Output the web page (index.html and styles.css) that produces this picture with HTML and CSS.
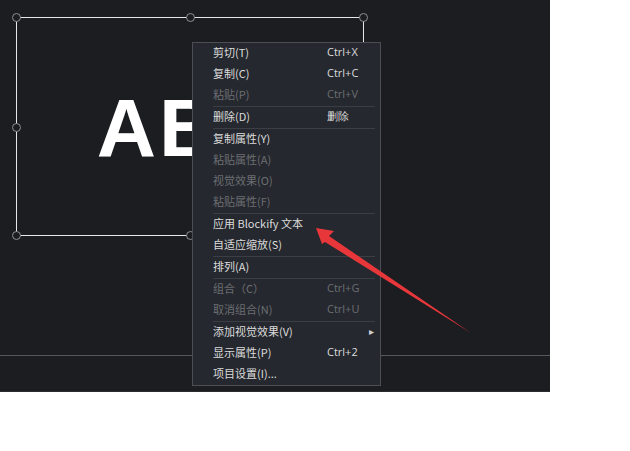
FILE: index.html
```html
<!DOCTYPE html>
<html>
<head>
<meta charset="utf-8">
<title>Blockify</title>
<link rel="stylesheet" href="styles.css">
</head>
<body>
<div class="editor">
  <div class="stage">
    <div class="selection">
      <div class="sel-text">ABC</div>
      <span class="handle h-tl"></span>
      <span class="handle h-tc"></span>
      <span class="handle h-tr"></span>
      <span class="handle h-ml"></span>
      <span class="handle h-bl"></span>
      <span class="handle h-bc"></span>
    </div>
  </div>
  <div class="timeline"></div>

  <ul class="menu">
    <li class="item"><span class="label">剪切(T)</span><span class="key">Ctrl+X</span></li>
    <li class="item"><span class="label">复制(C)</span><span class="key">Ctrl+C</span></li>
    <li class="item off"><span class="label">粘贴(P)</span><span class="key">Ctrl+V</span></li>
    <li class="sep"></li>
    <li class="item"><span class="label">删除(D)</span><span class="key">删除</span></li>
    <li class="sep"></li>
    <li class="item"><span class="label">复制属性(Y)</span></li>
    <li class="item off"><span class="label">粘贴属性(A)</span></li>
    <li class="item off"><span class="label">视觉效果(O)</span></li>
    <li class="item off"><span class="label">粘贴属性(F)</span></li>
    <li class="sep"></li>
    <li class="item"><span class="label">应用 Blockify 文本</span></li>
    <li class="item"><span class="label">自适应缩放(S)</span></li>
    <li class="sep"></li>
    <li class="item"><span class="label">排列(A)</span></li>
    <li class="sep"></li>
    <li class="item off"><span class="label">组合（C）</span><span class="key">Ctrl+G</span></li>
    <li class="item off"><span class="label">取消组合(N)</span><span class="key">Ctrl+U</span></li>
    <li class="sep"></li>
    <li class="item"><span class="label">添加视觉效果(V)</span><span class="arrow">&#9656;</span></li>
    <li class="item"><span class="label">显示属性(P)</span><span class="key">Ctrl+2</span></li>
    <li class="item"><span class="label">项目设置(I)...</span></li>
  </ul>

  <svg class="pointer" width="200" height="130" viewBox="300 210 200 130">
    <polygon fill="#e8373a" points="316,228 334,231 329,236 471,333 325,242 322,244"/>
  </svg>
</div>
</body>
</html>
```

FILE: styles.css
```css
body {
  margin: 0;
  background: #fff;
  font-family: "Noto Sans CJK SC", "Noto Sans", sans-serif;
}

.editor {
  position: relative;
  width: 550px;
  height: 392px;
  background: #1b1d21;
  display: flex;
  flex-direction: column;
  border-bottom: 1px solid #2a2c30;
  box-sizing: border-box;
}

.stage {
  height: 355px;
  border-bottom: 1px solid #55585d;
  position: relative;
}

.timeline {
  flex: 1;
}

.selection {
  position: absolute;
  left: 16px;
  top: 17px;
  width: 348px;
  height: 219px;
  border: 1px solid #e6e6e6;
  box-sizing: border-box;
  display: flex;
  align-items: center;
  justify-content: center;
}

.sel-text {
  color: #fff;
  font-family: "Liberation Sans", Arial, sans-serif;
  font-weight: bold;
  font-size: 82px;
  letter-spacing: 3px;
  line-height: 1;
  margin-top: 2px;
}

.handle {
  position: absolute;
  width: 7px;
  height: 7px;
  border: 1px solid #8e9094;
  border-radius: 50%;
  background: #1b1d21;
}
.h-tl { left: -5px; top: -5px; }
.h-tc { left: 169px; top: -5px; }
.h-tr { right: -5px; top: -5px; }
.h-ml { left: -5px; top: 105px; }
.h-bl { left: -5px; bottom: -5px; }
.h-bc { left: 169px; bottom: -5px; }

.menu {
  position: absolute;
  left: 192px;
  top: 42px;
  width: 189px;
  margin: 0;
  padding: 0;
  list-style: none;
  background: #25282e;
  border: 1px solid #4b4e54;
  box-sizing: border-box;
  font-size: 11px;
  line-height: 14px;
  color: #dcdcdc;
}

.item {
  height: 21px;
  box-sizing: border-box;
  padding: 0 0 3px 20px;
  display: flex;
  align-items: center;
  position: relative;
}

.item.off {
  color: #6c6e73;
}

.label {
  width: 114px;
  white-space: nowrap;
}

.key {
  font-family: "Open Sans", "Noto Sans", sans-serif;
  font-size: 11px;
}

.arrow {
  position: absolute;
  left: 176px;
  font-size: 10px;
  color: #d0d0d0;
}

.sep {
  height: 1px;
  margin: 0 5px 0 20px;
  background: #3b3e44;
}

.pointer {
  position: absolute;
  left: 300px;
  top: 210px;
}
```
